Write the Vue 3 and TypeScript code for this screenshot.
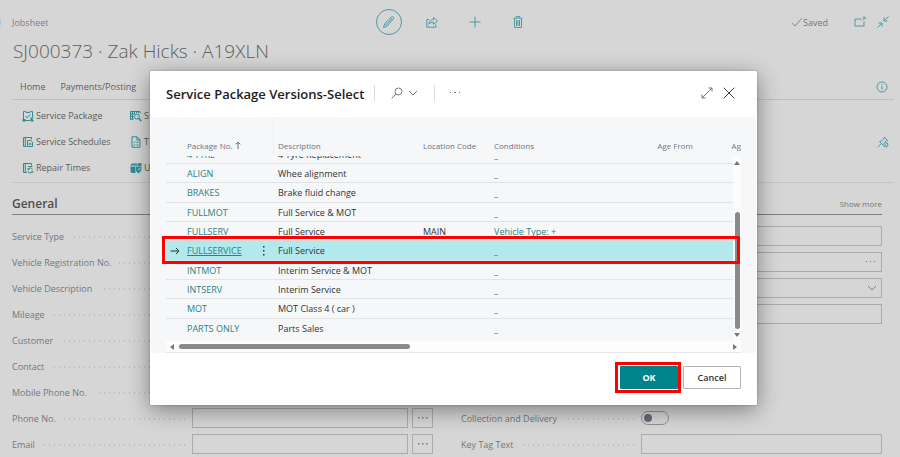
<script setup lang="ts">
import { onMounted, ref } from 'vue'

interface ServicePackage {
  code: string
  description: string
  location?: string
  conditions: string
}

interface Field {
  label: string
  assist?: boolean
}

const packages: ServicePackage[] = [
  { code: '4 TYRE', description: '4 Tyre Replacement', conditions: '_' },
  { code: 'ALIGN', description: 'Whee alignment', conditions: '_' },
  { code: 'BRAKES', description: 'Brake fluid change', conditions: '_' },
  { code: 'FULLMOT', description: 'Full Service & MOT', conditions: '_' },
  { code: 'FULLSERV', description: 'Full Service', location: 'MAIN', conditions: 'Vehicle Type: +' },
  { code: 'FULLSERVICE', description: 'Full Service', conditions: '_' },
  { code: 'INTMOT', description: 'Interim Service & MOT', conditions: '_' },
  { code: 'INTSERV', description: 'Interim Service', conditions: '_' },
  { code: 'MOT', description: 'MOT Class 4 ( car )', conditions: '_' },
  { code: 'PARTS ONLY', description: 'Parts Sales', conditions: '_' },
]

const fields: Field[] = [
  { label: 'Service Type' },
  { label: 'Vehicle Registration No.', assist: true },
  { label: 'Vehicle Description' },
  { label: 'Mileage' },
  { label: 'Customer', assist: true },
  { label: 'Contact', assist: true },
  { label: 'Mobile Phone No.', assist: true },
  { label: 'Phone No.', assist: true },
  { label: 'Email', assist: true },
]

const selected = ref('FULLSERVICE')
const collection = ref(false)
const viewport = ref<HTMLElement | null>(null)

onMounted(() => {
  if (viewport.value) viewport.value.scrollTop = 11
})
</script>

<template>
  <div class="page">
    <main class="card">
      <button class="back" type="button" aria-label="Back"></button>
      <header class="topbar">
        <a class="crumb" href="#">Jobsheet</a>
        <div class="tools">
          <button class="tool ring" type="button" aria-label="Edit">
            <svg width="14" height="14" viewBox="0 0 14 14"><path d="M1.500 12.500l1.200-3.800L9.400 2q1-.9 1.900 0t0 1.900L5.100 11.200zM3.200 8.700l2 2M8.500 3l1.900 1.900M4.500 9.300l4.700-5" /></svg>
          </button>
          <button class="tool" type="button" aria-label="Share">
            <svg width="14" height="14" viewBox="0 0 14 14"><path d="M4 4.500H1.800v7.700h9V9.500M3.700 9.300c.3-3 2-4.600 4.800-4.700V2.500L12.500 6 8.500 9.300V7.200C6.500 7.200 5 7.800 3.700 9.300z" /></svg>
          </button>
          <button class="tool" type="button" aria-label="New">
            <svg width="14" height="14" viewBox="0 0 14 14"><path d="M7 1.500v11M1.500 7h11" /></svg>
          </button>
          <button class="tool" type="button" aria-label="Delete">
            <svg width="14" height="14" viewBox="0 0 14 14"><path d="M2.500 3.200h9M5.300 3V1.500h3.400V3M3.500 3.500v9h7v-9M5.500 5v6M7 5v6M8.500 5v6" /></svg>
          </button>
        </div>
        <div class="status">
          <svg class="grey" width="12" height="12" viewBox="0 0 12 12"><path d="M1 7l3 3 7-8" /></svg>
          <span class="saved">Saved</span>
          <button class="mini" type="button" aria-label="Open in new window">
            <svg width="12" height="12" viewBox="0 0 12 12"><path d="M7 3H1v7h9V5.500M8 4.300l3-3M8.800 1.200H11v2.200" /></svg>
          </button>
          <button class="mini" type="button" aria-label="Collapse">
            <svg width="12" height="12" viewBox="0 0 12 12"><path d="M11.500.500L7.200 4.800M7 1.500V5h3.500M.500 11.500l4.300-4.300M1.500 7H5v3.500" /></svg>
          </button>
        </div>
      </header>

      <h1>SJ000373 · Zak Hicks · A19XLN</h1>

      <nav class="tabs">
        <a href="#">Home</a>
        <a href="#">Payments/Posting</a>
        <button class="mini info" type="button" aria-label="Details">
          <svg width="12" height="12" viewBox="0 0 12 12"><circle cx="6" cy="6" r="5" /><path d="M6 5.200v3.500M6 3.200v1" /></svg>
        </button>
      </nav>

      <div class="actions">
        <div class="group">
          <button type="button">
            <svg width="12" height="12" viewBox="0 0 12 12"><path d="M3 1.500H1.500v9h6.500M9 1.500h1.500v5.500M4 .800v1.700h4V.800M3.500 6l1.700 1.800L8.300 4.300" /><path class="fill" d="M.500 9h3v2.500h-3zM8.500 7.500h3v1h-.8v1.500h.8v1.500h-3z" /></svg>
            Service Package
          </button>
          <button type="button">
            <svg width="12" height="12" viewBox="0 0 12 12"><path d="M4.500 10.500h-3v-9h8v2M3.300 1.500v9M5.500 4.500h3.300l1.700 1.700v4.300h-5zM7.300 7v2M8.800 7v2" /></svg>
            Service Schedules
          </button>
          <button type="button">
            <svg width="12" height="12" viewBox="0 0 12 12"><path d="M5 10.500H1.500v-9h8v2M3.300 1.500v9M6 4.500h4.500M6.300 7.500a2.200 2.200 0 0 1 4.200 0M6 9a2.200 2.200 0 0 0 4.300.5M6 6v1.500h1.500M10.800 10.800V9.300H9.300" /></svg>
            Repair Times
          </button>
        </div>
        <div class="group">
          <button type="button">
            <svg width="12" height="12" viewBox="0 0 12 12"><path d="M.500 10V1.500h9.500v2M2.500 1v9M4.500 1v3M6.500 1v2M8.500 1v2M.500 4h3.500M.500 6.500h3M.500 9h3" /><circle cx="6.800" cy="6.500" r="2.500" /><path d="M8.700 8.500l2.600 2.600" stroke-width="1.500" /></svg>
            S
          </button>
          <button type="button">
            <svg width="12" height="12" viewBox="0 0 12 12"><path d="M2 .800h5l3 3v7.500H2zM7 1v3h3M3.500 6l.7.7 1-1.200M6.500 6.300h2M3.500 8.800l.7.7 1-1.200M6.500 9h2" /></svg>
            T
          </button>
          <button type="button">
            <svg width="12" height="12" viewBox="0 0 12 12"><path class="fill" d="M.500 3l1.500-1.500h5V3.500h-1.500v7.500h-3.500L.500 10zM6 4.500h5.500v3.500L8.700 11.500 6 9zM7.500 1.500L11.500 1v3h-4z" /><path class="cut" d="M.500 4h5M7.500 7l1 1 2-2.300" /></svg>
            U
          </button>
        </div>
        <button class="mini pin" type="button" aria-label="Pin">
          <svg width="12" height="12" viewBox="0 0 12 12"><path d="M.800 11.200l3.500-3.700M2.500 5.500l2-.5L7 2.500V1l3.700 3.500H9.500L8 6M2.500 5.500L6 9" /><circle cx="8.700" cy="8.700" r="2.200" /><path d="M7.300 10.200l2.900-3" /></svg>
        </button>
      </div>

      <section>
        <div class="section-head">
          <h2>General</h2>
          <button type="button">Show more</button>
        </div>
        <div class="form">
          <div class="column">
            <div v-for="(field, i) in fields" :key="field.label" class="row">
              <label :for="'field-' + i">{{ field.label }}</label>
              <span class="dots"></span>
              <div class="control">
                <input :id="'field-' + i" type="text" />
                <button v-if="field.assist" class="assist" type="button" :aria-label="field.label + ' lookup'">
                  <svg width="12" height="4" viewBox="0 0 12 4"><path class="fill" d="M1 1h1.500v1.500H1zM5 1h1.500v1.500H5zM9 1h1.500v1.500H9z" /></svg>
                </button>
              </div>
            </div>
          </div>
          <div class="column">
            <div class="row">
              <span class="dots"></span>
              <div class="control"><input type="text" aria-label="Service reference" /></div>
            </div>
            <div class="row">
              <span class="dots"></span>
              <div class="control boxed">
                <input type="text" aria-label="Location" />
                <button type="button" aria-label="Location lookup">
                  <svg width="12" height="4" viewBox="0 0 12 4"><path class="fill" d="M1 1h1v1H1zM5 1h1v1H5zM9 1h1v1H9z" /></svg>
                </button>
              </div>
            </div>
            <div class="row">
              <span class="dots"></span>
              <div class="control boxed">
                <select aria-label="Status"><option></option></select>
                <svg width="10" height="6" viewBox="0 0 10 6"><path d="M1 1l4 4 4-4" /></svg>
              </div>
            </div>
            <div class="row">
              <span class="dots"></span>
              <div class="control"><input type="text" aria-label="Order reference" /></div>
            </div>
            <div class="row"></div>
            <div class="row"></div>
            <div class="row"></div>
            <div class="row">
              <label for="collection">Collection and Delivery</label>
              <span class="dots"></span>
              <div class="control"><input id="collection" v-model="collection" class="toggle" type="checkbox" /></div>
            </div>
            <div class="row">
              <label for="key-tag">Key Tag Text</label>
              <span class="dots"></span>
              <div class="control"><input id="key-tag" type="text" /></div>
            </div>
          </div>
        </div>
      </section>
    </main>

    <div class="overlay">
      <div class="dialog" role="dialog" aria-modal="true" aria-labelledby="dialog-title">
        <header class="dialog-head">
          <h3 id="dialog-title">Service Package Versions-Select</h3>
          <button class="search" type="button" aria-label="Search">
            <svg width="12" height="12" viewBox="0 0 12 12"><circle cx="7.500" cy="4.500" r="3.500" /><path d="M5 7L.700 11.300" /></svg>
            <svg width="10" height="6" viewBox="0 0 10 6"><path d="M1 1l4 4 4-4" /></svg>
          </button>
          <button class="more" type="button" aria-label="More options">
            <svg width="12" height="4" viewBox="0 0 12 4"><path class="fill" d="M1 1h1v1H1zM5 1h2v1H5zM10 1h1v1h-1z" /></svg>
          </button>
          <span class="spacer"></span>
          <button type="button" aria-label="Expand">
            <svg width="12" height="12" viewBox="0 0 12 12"><path d="M1 11L11 1M7.500 1H11v3.500M1 7.500V11h3.500" /></svg>
          </button>
          <button class="close" type="button" aria-label="Close">
            <svg width="12" height="12" viewBox="0 0 12 12"><path d="M.700.700l10.600 10.600M11.300.700L.700 11.300" /></svg>
          </button>
        </header>

        <div class="dialog-body">
          <div class="grid">
            <div ref="viewport" class="viewport">
              <table>
                <colgroup>
                  <col class="c-mark" />
                  <col class="c-code" />
                  <col class="c-menu" />
                  <col class="c-desc" />
                  <col class="c-loc" />
                  <col class="c-cond" />
                  <col class="c-age" />
                  <col class="c-to" />
                </colgroup>
                <thead>
                  <tr>
                    <th></th>
                    <th colspan="2" class="sorted">Package No.
                      <svg width="6" height="8" viewBox="0 0 6 8"><path d="M3 8V1M.700 3.300L3 1l2.300 2.300" /></svg>
                    </th>
                    <th>Description</th>
                    <th>Location Code</th>
                    <th>Conditions</th>
                    <th class="num">Age From</th>
                    <th class="num">Ag</th>
                  </tr>
                </thead>
                <tbody>
                  <tr v-for="item in packages" :key="item.code" :class="{ selected: item.code === selected }" @click="selected = item.code">
                    <td class="mark">
                      <svg v-if="item.code === selected" width="10" height="8" viewBox="0 0 10 8"><path d="M.500 4h8.500M6 1l3 3-3 3" /></svg>
                    </td>
                    <td><a href="#">{{ item.code }}</a></td>
                    <td class="menu">
                      <button v-if="item.code === selected" type="button" aria-label="Row options">
                        <svg width="4" height="12" viewBox="0 0 4 12"><path class="fill" d="M1 1h1.500v1.500H1zM1 5h1.500v1.500H1zM1 9h1.500v1.500H1z" /></svg>
                      </button>
                    </td>
                    <td>{{ item.description }}</td>
                    <td>{{ item.location }}</td>
                    <td><a href="#">{{ item.conditions }}</a></td>
                    <td></td>
                    <td></td>
                  </tr>
                </tbody>
              </table>
            </div>
            <div class="vbar">
              <svg width="6" height="4" viewBox="0 0 6 4"><path class="fill" d="M3 0l3 4H0z" /></svg>
              <span class="vthumb"></span>
              <svg width="6" height="4" viewBox="0 0 6 4"><path class="fill" d="M0 0h6L3 4z" /></svg>
            </div>
            <div class="hbar">
              <svg width="4" height="6" viewBox="0 0 4 6"><path class="fill" d="M4 0v6L0 3z" /></svg>
              <span class="htrack"><span class="hthumb"></span></span>
              <svg width="4" height="6" viewBox="0 0 4 6"><path class="fill" d="M0 0l4 3-4 3z" /></svg>
            </div>
            <div class="row-marker"></div>
          </div>
        </div>

        <footer class="dialog-foot">
          <span class="marked"><button class="primary" type="button">OK</button></span>
          <button class="secondary" type="button">Cancel</button>
        </footer>
      </div>
    </div>
  </div>
</template>

<style>
body {
  background: #d6d6d6;
}
</style>

<style scoped>
.page {
  position: relative;
  height: 100vh;
  overflow: hidden;
  background: #d6d6d6;
  font-family: "Open Sans", "Noto Sans", sans-serif;
  font-size: 9px;
  line-height: 14px;
  color: #74777c;
}
button,
input,
select {
  margin: 0;
  padding: 0;
  border: 0;
  background: none;
  color: inherit;
  font: inherit;
}
button {
  display: flex;
  align-items: center;
  justify-content: center;
}
a {
  color: inherit;
  text-decoration: none;
}
svg {
  display: block;
  flex: none;
  fill: none;
  stroke: currentColor;
  stroke-width: 1;
}
.fill {
  fill: currentColor;
  stroke: none;
}
.cut {
  stroke: #d6d6d6;
}
h1,
h2,
h3 {
  margin: 0;
}

.back {
  position: absolute;
  top: 9px;
  left: -25px;
  width: 26px;
  height: 26px;
  border: 1px solid #9fc9cc;
  border-radius: 50%;
}
.topbar {
  display: grid;
  grid-template-columns: 1fr auto 1fr;
  align-items: center;
  height: 28px;
  padding: 8px 6px 0 12px;
}
.crumb {
  padding-top: 2px;
  color: #7b808c;
}
.tools {
  display: flex;
  gap: 17px;
  color: #4c9ba0;
}
.tool {
  width: 26px;
  height: 26px;
}
.ring {
  border: 1px solid #4c9ba0;
  border-radius: 50%;
}
.status {
  display: flex;
  align-items: center;
  justify-content: flex-end;
  padding-right: 5px;
}
.grey {
  color: #85898e;
}
.saved {
  margin-right: 26px;
  padding-top: 2px;
}
.mini {
  color: #4c9ba0;
}
.mini + .mini {
  margin-left: 11px;
}
h1 {
  padding-left: 13px;
  font-size: 19px;
  font-weight: 300;
  line-height: 30px;
  color: #5e5e5e;
}
.tabs {
  display: flex;
  align-items: center;
  gap: 15px;
  height: 25px;
  margin: 8px 6px 0 12px;
  padding-left: 8px;
  border-bottom: 1px solid #bfbfbf;
  color: #5c5c5c;
}
.info {
  margin-left: auto;
  margin-right: 6px;
}
.actions {
  display: flex;
  align-items: center;
  height: 83px;
  margin: 0 6px 0 12px;
  padding: 2px 0 0 10px;
  box-sizing: border-box;
  border-bottom: 1px solid #c6c6c6;
  color: #5c5c5c;
}
.group {
  display: grid;
  grid-auto-rows: 26px;
  width: 108px;
}
.group button {
  justify-content: flex-start;
  gap: 2px;
}
.group svg {
  color: #2f8c92;
}
.pin {
  margin-left: auto;
  margin-right: 5px;
}
.section-head {
  display: flex;
  align-items: center;
  justify-content: space-between;
  height: 23px;
  margin: 8px 18px 0 12px;
  border-bottom: 1px solid #77818a;
}
h2 {
  padding-top: 2px;
  font-size: 12px;
  font-weight: 600;
  line-height: 20px;
  color: #4e4e4e;
}
.section-head button {
  padding-top: 2px;
  font-size: 8px;
}
.form {
  display: grid;
  grid-template-columns: 1fr 1fr;
  gap: 28px;
  padding: 8px 18px 0 12px;
}
.row {
  display: grid;
  grid-template-columns: auto 1fr 241px;
  align-items: center;
  height: 26px;
}
.row label {
  padding-top: 2px;
}
.dots {
  height: 2px;
  margin: 1px 7px 0 8px;
  background: repeating-linear-gradient(to left, #bdbdbd 0 1px, transparent 1px 5px);
}
.control {
  display: flex;
  gap: 4px;
  grid-column: 3;
}
.control input,
.control select {
  flex: 1;
  min-width: 0;
  height: 20px;
  box-sizing: border-box;
  border: 1px solid #a9abaf;
}
.assist {
  width: 21px;
  height: 20px;
  box-sizing: border-box;
  border: 1px solid #a9abaf;
}
.boxed {
  align-items: center;
  padding-right: 4px;
  border: 1px solid #a9abaf;
}
.boxed input,
.boxed select {
  height: 18px;
  border: 0;
  appearance: none;
}
.control .toggle {
  flex: none;
  width: 28px;
  height: 14px;
  padding: 2px;
  appearance: none;
  border: 1px solid #8f9298;
  border-radius: 7px;
}
.toggle::before {
  content: "";
  display: block;
  width: 8px;
  height: 8px;
  border-radius: 50%;
  background: #666b78;
}
.toggle:checked::before {
  margin-left: auto;
}

.overlay {
  position: absolute;
  inset: 0;
  display: grid;
  align-content: start;
  padding: 71px 143px 52px 150px;
}
.dialog {
  background: #fff;
  border-radius: 1px;
  box-shadow: 0 0 2px rgba(0, 0, 0, 0.3), 0 5px 22px rgba(0, 0, 0, 0.42);
  color: #333;
}
.dialog-head {
  display: flex;
  align-items: center;
  height: 44px;
  padding: 0 22px 2px 16px;
  color: #777;
}
h3 {
  padding-top: 2px;
  font-size: 13px;
  font-weight: 600;
  line-height: 20px;
  color: #212121;
}
.search {
  gap: 5px;
  height: 16px;
  margin-left: 10px;
  padding: 0 16px;
  border: solid #dcdcdc;
  border-width: 0 1px;
}
.more {
  margin-left: 14px;
}
.spacer {
  flex: 1;
}
.close {
  margin-left: 10px;
  color: #444;
}
.dialog-body {
  margin: 0 1px;
  padding: 0 15px;
  background: #f6f7f9;
}
.grid {
  position: relative;
}
.viewport {
  height: 224px;
  overflow: hidden;
}
table {
  width: 575px;
  min-width: 100%;
  table-layout: fixed;
  border-collapse: separate;
  border-spacing: 0;
  margin-bottom: 6px;
}
.c-mark { width: 21px; }
.c-code { width: 67px; }
.c-menu { width: 20px; }
.c-desc { width: 145px; }
.c-loc { width: 71px; }
.c-cond { width: 122px; }
.c-age { width: 81px; }
.c-to { width: 48px; }
th {
  position: sticky;
  top: 0;
  z-index: 1;
  height: 39px;
  padding: 0 0 4px;
  box-sizing: border-box;
  background: #f6f7f9;
  vertical-align: bottom;
  font-size: 8px;
  font-weight: 400;
  line-height: 12px;
  text-align: left;
  white-space: nowrap;
  color: #6b7280;
}
th svg {
  display: inline-block;
}
.sorted {
  border-right: 1px solid #eeeff1;
}
th:nth-child(n + 3),
td:nth-child(n + 4) {
  padding-left: 4px;
}
.num {
  text-align: right;
}
td {
  height: 19px;
  padding: 1px 0 0;
  box-sizing: border-box;
  border-bottom: 1px solid #e1e3e6;
  white-space: nowrap;
}
tr:nth-child(3n) td {
  height: 20px;
}
tr:last-child td {
  border-bottom-color: transparent;
}
td a {
  color: #2a8287;
}
.selected td {
  background: #b1e9ec;
}
.selected td:nth-child(2) a {
  text-decoration: underline;
}
.mark svg {
  margin-left: 4px;
}
.menu svg {
  margin-left: 8px;
}
.vbar {
  position: absolute;
  top: 39px;
  right: 0;
  z-index: 2;
  display: flex;
  flex-direction: column;
  align-items: center;
  width: 8px;
  height: 185px;
  padding: 5px 0 4px;
  box-sizing: border-box;
  background: #fcfcfc;
  color: #777;
}
.vthumb {
  flex: 1;
  width: 5px;
  margin: 47px 0 4px;
  border-radius: 3px;
  background: #8a8a8a;
}
.hbar {
  display: flex;
  align-items: center;
  gap: 4px;
  height: 11px;
  padding: 0 4px;
  background: #fcfcfc;
  border-bottom: 1px solid #e6e6e6;
  color: #777;
}
.htrack {
  flex: 1;
}
.hthumb {
  display: block;
  width: 42%;
  height: 5px;
  margin-left: 1px;
  border-radius: 3px;
  background: #8a8a8a;
}
.row-marker {
  position: absolute;
  top: 119px;
  left: -4px;
  right: 1px;
  z-index: 3;
  height: 28px;
  box-sizing: border-box;
  border: 3px solid #f00;
  pointer-events: none;
}
.dialog-foot {
  display: flex;
  align-items: center;
  justify-content: flex-end;
  gap: 2px;
  padding: 9px 16px 12px;
}
.marked {
  padding: 1px 0 1px 2px;
  border: 3px solid #f00;
}
.primary,
.secondary {
  width: 58px;
  height: 23px;
  padding-top: 1px;
  border-radius: 1px;
  font-weight: 600;
}
.primary {
  background: #00838a;
  color: #fff;
  font-weight: 700;
}
.secondary {
  box-sizing: border-box;
  border: 1px solid #b3b3b3;
}
</style>
